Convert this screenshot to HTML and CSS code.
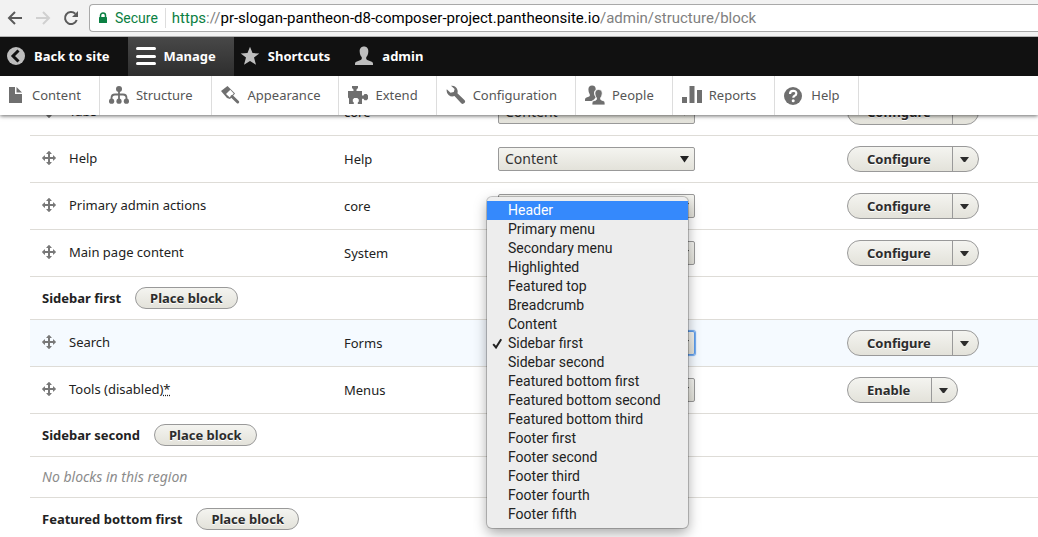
FILE: index.html
```html
<!DOCTYPE html>
<html lang="en">
<head>
<meta charset="utf-8">
<title>Block layout</title>
<link rel="stylesheet" href="styles.css">
</head>
<body>
<svg class="sprite" aria-hidden="true">
  <symbol id="move" viewBox="0 0 16 16"><path d="M14.904 7.753l-2.373-2.372c-.291-.292-.529-.193-.529.22v1.399h-3v-3h1.398c.414 0 .512-.239.221-.53l-2.371-2.372c-.137-.136-.36-.136-.497 0l-2.372 2.372c-.292.292-.193.53.22.53h1.399v3h-3v-1.369c0-.413-.239-.511-.53-.22l-2.372 2.372c-.136.136-.136.359 0 .494l2.372 2.372c.291.292.53.193.53-.221v-1.427h3v3h-1.400c-.413 0-.511.238-.22.529l2.374 2.373c.137.137.36.137.495 0l2.373-2.373c.29-.291.19-.529-.223-.529h-1.398v-3h3v1.400c0 .413.238.511.529.219l2.373-2.371c.137-.137.137-.359 0-.495z"/></symbol>
  <symbol id="caret" viewBox="0 0 9 5"><path d="M0 0h9L5.600 4.400Q4.500 5.400 3.400 4.400z"/></symbol>
  <symbol id="arrow" viewBox="0 0 9 7"><path d="M0 0h9L4.500 6.500z"/></symbol>
</svg>

<header class="top">
  <div class="browser">
    <button class="nav" type="button" aria-label="Back"><svg viewBox="0 0 16 16" width="16" height="16"><path d="M15 8H2M8 2L2 8l6 6" fill="none" stroke="#5a5a5a" stroke-width="2"/></svg></button>
    <button class="nav" type="button" aria-label="Forward" disabled><svg viewBox="0 0 16 16" width="16" height="16"><path d="M1 8h13M8 2l6 6-6 6" fill="none" stroke="#d0d0d0" stroke-width="2"/></svg></button>
    <button class="nav" type="button" aria-label="Reload"><svg viewBox="0 0 16 16" width="16" height="16"><path d="M13.700 10A6 6 0 1 1 12.300 3.800" fill="none" stroke="#5a5a5a" stroke-width="2"/><path d="M15 1v6H9z" fill="#5a5a5a"/></svg></button>
    <div class="address">
      <svg class="lock" viewBox="0 0 10 12" width="10" height="12"><path d="M2.500 5.500V3.500a2.500 2.500 0 0 1 5 0v2" fill="none" stroke="#0b8043" stroke-width="1.500"/><rect x="1" y="5" width="8" height="6" rx=".6" fill="#0b8043"/></svg>
      <span class="secure">Secure</span>
      <div class="url" role="textbox" aria-label="Address" contenteditable="true" spellcheck="false"><span class="scheme">https</span><span class="dim">://</span>pr-slogan-pantheon-d8-composer-project.pantheonsite.io<span class="dim">/admin/structure/block</span></div>
    </div>
  </div>

  <nav class="bar" aria-label="Toolbar">
    <a class="tab" href="#"><svg viewBox="0 0 20 20" width="20" height="20"><circle cx="10" cy="10" r="9" fill="#bebebe"/><path d="M12.500 4.500L7 10l5.500 5.500" fill="none" stroke="#111" stroke-width="3"/></svg>Back to site</a>
    <a class="tab active" href="#"><svg viewBox="0 0 20 20" width="20" height="20" fill="#fff"><rect y="1" width="20" height="3" rx="1.500"/><rect y="9" width="20" height="3" rx="1.500"/><rect y="16" width="20" height="3" rx="1.500"/></svg>Manage</a>
    <a class="tab" href="#"><svg viewBox="0 0 20 20" width="20" height="20" fill="#bebebe"><path d="M10 .8l2.500 6.300 6.800.3-5.300 4.200 2 7.100L10 14.900l-6 3.800 2-7.100L.7 7.400l6.800-.3z"/></svg>Shortcuts</a>
    <a class="tab" href="#"><svg viewBox="0 0 20 20" width="20" height="20" fill="#bebebe"><path d="M10 .5c3 0 4.500 2.200 4.300 5.200-.1 2.300-1 4.300-2 5.400-.3 1.800 0 2.500 1 3l4.400 1.700c.8.300 1.200 1 1.300 1.900v1.300H1v-1.300c.1-.9.500-1.600 1.300-1.900l4.400-1.700c1-.5 1.300-1.200 1-3-1-1.100-1.900-3.100-2-5.400C5.500 2.700 7 .5 10 .5z"/></svg>admin</a>
  </nav>

  <nav class="tray" aria-label="Administration">
    <a class="item" href="#"><svg viewBox="0 0 16 20" width="16" height="20"><path d="M0 2h6v7h7v9H0z"/><path d="M7.500 2l5.500 5.500H7.500z"/></svg>Content</a>
    <a class="item" href="#"><svg viewBox="0 0 20 20" width="20" height="20"><circle cx="10" cy="4" r="3"/><path d="M10 5v11M2.500 16v-3q0-3.500 3.500-3.500h8q3.500 0 3.500 3.500v3" fill="none" stroke="#6f6f6f" stroke-width="1.800"/><circle cx="2.600" cy="16.200" r="2.600"/><circle cx="10" cy="16.200" r="2.600"/><circle cx="17.400" cy="16.200" r="2.600"/></svg>Structure</a>
    <a class="item" href="#"><svg viewBox="0 0 20 20" width="20" height="20"><path d="M0 6L6.500 1 14 8.500l-5 5.500L6 13z"/><path d="M5 9L9.300 4.800l3.500 3.700-4 4z" fill="#fff"/><path d="M11 11.500l5.700 5.500" fill="none" stroke="#6f6f6f" stroke-width="3" stroke-linecap="round"/></svg>Appearance</a>
    <a class="item" href="#"><svg viewBox="0 0 20 20" width="20" height="20"><path d="M0 6h5.500V4.500L4 3V1h6v2L8.500 4.500V6H14v4.500h1.500l1-1.500h2.200l1.300 1.500v3.200l-1.300 1.500h-2.200l-1-1.500H14V19H9.800v-1.500l1-1V14.500L9.300 13H6.200l-1.400 1.500v2l1 1V19H1v-5.500l-1-1z"/></svg>Extend</a>
    <a class="item" href="#"><svg viewBox="0 0 20 20" width="20" height="20"><path d="M5 .8a5.800 5.800 0 0 1 6.400 7.500l7 6.600a2.300 2.300 0 0 1-3.200 3.300L8.500 11A5.800 5.800 0 0 1 .8 4.200l3.700 3.600L7.800 7l.8-3z"/></svg>Configuration</a>
    <a class="item" href="#"><svg viewBox="0 0 20 20" width="20" height="20"><path d="M7 .5C9.500.5 11 2 10.700 4.700 9 6 8.800 7.500 9.300 9.500c.4 1.300 1 2.200 1.500 2.700L9 14.500 6.500 16H0v-1.500q0-1.500 1.500-2l2.700-1q1-.7.600-2Q3.400 7.500 3.400 4.500C3.400 2 4.800.5 7 .5z"/><path d="M13.500 4.500c2.500 0 4 1.500 3.700 4.200-.1 1.800-.8 3.200-1.600 4.200q-.3 1.500.6 2l2.600 1q1.200.6 1.200 2V20H7v-2q0-1.500 1.200-2l2.800-1q.8-.6.500-2c-.8-1-1.500-2.300-1.600-4.200-.2-2.700 1.100-4.300 3.600-4.300z" stroke="#fff" stroke-width=".8"/></svg>People</a>
    <a class="item" href="#"><svg viewBox="0 0 20 20" width="20" height="20"><rect x="0" y="12" width="5" height="6"/><rect x="7.500" y="1" width="5" height="17"/><rect x="15" y="5" width="5" height="13"/></svg>Reports</a>
    <a class="item" href="#"><svg viewBox="0 0 20 20" width="20" height="20"><circle cx="9" cy="11" r="9"/><path d="M6 9q0-3.200 3.200-3.200T12.300 8.500q0 1.500-1.700 2.300-1.300.7-1.300 2" fill="none" stroke="#fff" stroke-width="2.200"/><circle cx="9.200" cy="15.800" r="1.500" fill="#fff"/></svg>Help</a>
  </nav>
</header>

<main class="page">
  <table class="blocks">
    <colgroup><col class="c-block"><col class="c-category"><col class="c-region"><col></colgroup>
    <tbody>
      <tr>
        <td><div class="name"><svg class="move"><use href="#move"/></svg>Tabs</div></td>
        <td>core</td>
        <td><div class="pick"><select aria-label="Region for Tabs"><option>Content</option></select><svg class="arrow"><use href="#arrow"/></svg></div></td>
        <td><div class="drop"><button type="button" class="main">Configure</button><button type="button" class="more" aria-label="More actions"><svg class="caret"><use href="#caret"/></svg></button></div></td>
      </tr>
      <tr>
        <td><div class="name"><svg class="move"><use href="#move"/></svg>Help</div></td>
        <td>Help</td>
        <td><div class="pick"><select aria-label="Region for Help"><option>Content</option></select><svg class="arrow"><use href="#arrow"/></svg></div></td>
        <td><div class="drop"><button type="button" class="main">Configure</button><button type="button" class="more" aria-label="More actions"><svg class="caret"><use href="#caret"/></svg></button></div></td>
      </tr>
      <tr>
        <td><div class="name"><svg class="move"><use href="#move"/></svg>Primary admin actions</div></td>
        <td>core</td>
        <td><div class="pick"><select aria-label="Region for Primary admin actions"><option>Content</option></select><svg class="arrow"><use href="#arrow"/></svg></div></td>
        <td><div class="drop"><button type="button" class="main">Configure</button><button type="button" class="more" aria-label="More actions"><svg class="caret"><use href="#caret"/></svg></button></div></td>
      </tr>
      <tr>
        <td><div class="name"><svg class="move"><use href="#move"/></svg>Main page content</div></td>
        <td>System</td>
        <td><div class="pick"><select aria-label="Region for Main page content"><option>Content</option></select><svg class="arrow"><use href="#arrow"/></svg></div></td>
        <td><div class="drop"><button type="button" class="main">Configure</button><button type="button" class="more" aria-label="More actions"><svg class="caret"><use href="#caret"/></svg></button></div></td>
      </tr>
      <tr class="region">
        <th colspan="4" scope="rowgroup"><div class="title">Sidebar first<button type="button" class="place">Place block</button></div></th>
      </tr>
      <tr class="current">
        <td><div class="name"><svg class="move"><use href="#move"/></svg>Search</div></td>
        <td>Forms</td>
        <td><div class="pick open"><select aria-label="Region for Search"><option>Sidebar first</option></select><svg class="arrow"><use href="#arrow"/></svg>
          <ul class="menu" role="listbox" aria-label="Region">
            <li class="choice hover" role="option">Header</li>
            <li class="choice" role="option">Primary menu</li>
            <li class="choice" role="option">Secondary menu</li>
            <li class="choice" role="option">Highlighted</li>
            <li class="choice" role="option">Featured top</li>
            <li class="choice" role="option">Breadcrumb</li>
            <li class="choice" role="option">Content</li>
            <li class="choice" role="option" aria-selected="true"><svg class="check" viewBox="0 0 11 11" width="11" height="11"><path d="M1.200 6.200L4 9.500 9.200 1.200" fill="none" stroke="#222" stroke-width="2"/></svg>Sidebar first</li>
            <li class="choice" role="option">Sidebar second</li>
            <li class="choice" role="option">Featured bottom first</li>
            <li class="choice" role="option">Featured bottom second</li>
            <li class="choice" role="option">Featured bottom third</li>
            <li class="choice" role="option">Footer first</li>
            <li class="choice" role="option">Footer second</li>
            <li class="choice" role="option">Footer third</li>
            <li class="choice" role="option">Footer fourth</li>
            <li class="choice" role="option">Footer fifth</li>
          </ul></div></td>
        <td><div class="drop"><button type="button" class="main">Configure</button><button type="button" class="more" aria-label="More actions"><svg class="caret"><use href="#caret"/></svg></button></div></td>
      </tr>
      <tr>
        <td><div class="name"><svg class="move"><use href="#move"/></svg><span>Tools (disabled)<abbr title="Changed">*</abbr></span></div></td>
        <td>Menus</td>
        <td><div class="pick"><select aria-label="Region for Tools"><option>Sidebar first</option></select><svg class="arrow"><use href="#arrow"/></svg></div></td>
        <td><div class="drop"><button type="button" class="main">Enable</button><button type="button" class="more" aria-label="More actions"><svg class="caret"><use href="#caret"/></svg></button></div></td>
      </tr>
      <tr class="region">
        <th colspan="4" scope="rowgroup"><div class="title">Sidebar second<button type="button" class="place">Place block</button></div></th>
      </tr>
      <tr class="empty">
        <td colspan="4"><em>No blocks in this region</em></td>
      </tr>
      <tr class="region">
        <th colspan="4" scope="rowgroup"><div class="title">Featured bottom first<button type="button" class="place">Place block</button></div></th>
      </tr>
    </tbody>
  </table>
</main>
</body>
</html>
```

FILE: styles.css
```css
* {
  box-sizing: border-box;
}

body {
  margin: 0;
  height: 100vh;
  display: flex;
  flex-direction: column;
  overflow: hidden;
  background: #fff;
  color: #222;
  font: 13px/20px "Lucida Grande", "Noto Sans", "Open Sans", sans-serif;
}

button,
select {
  font: inherit;
  color: inherit;
}

.sprite {
  display: none;
}

.top {
  position: relative;
  z-index: 1;
  flex: none;
  box-shadow: 0 1px 4px rgba(0, 0, 0, 0.6);
}

/* Browser chrome */

.browser {
  display: flex;
  align-items: center;
  gap: 12px;
  height: 37px;
  padding-left: 7px;
  background: #f2f2f2;
  border-bottom: 1px solid #b4b4b4;
}

.nav {
  display: flex;
  padding: 0;
  border: 0;
  background: none;
}

.address {
  flex: 1;
  display: flex;
  align-items: center;
  height: 28px;
  margin-left: -2px;
  padding-left: 8px;
  background: #fff;
  border: 1px solid #a9a9a9;
  border-right: 0;
  border-radius: 4px 0 0 4px;
  font: 14px/20px Roboto, sans-serif;
  white-space: nowrap;
}

.secure {
  margin-left: 7px;
  padding-right: 7px;
  border-right: 1px solid #ddd;
  color: #0b8043;
}

.url {
  padding-left: 6px;
  color: #000;
  font-size: 15px;
}

.scheme {
  color: #0b8043;
}

.dim {
  color: #808080;
}

/* Toolbar */

.bar {
  display: flex;
  height: 39px;
  background: #111;
}

.tab {
  display: flex;
  align-items: center;
  gap: 8px;
  padding: 0 18px 1px 6px;
  color: #fff;
  font-weight: 700;
  text-decoration: none;
}

.tab.active {
  padding-left: 8px;
  background: linear-gradient(#484848, #2e2e2e);
}

.tray {
  display: flex;
  height: 39px;
  background: #fff;
}

.item {
  display: flex;
  align-items: center;
  gap: 7px;
  padding: 0 18px 2px 9px;
  border-right: 1px solid #ddd;
  color: #565656;
  fill: #6f6f6f;
  text-decoration: none;
}

/* Block table */

.page {
  flex: 1;
  min-height: 0;
  overflow: hidden;
  padding-left: 30px;
}

.blocks {
  width: 100%;
  margin-top: -26px;
  table-layout: fixed;
  border-collapse: separate;
  border-spacing: 0;
}

.c-block {
  width: 302px;
}

.c-category {
  width: 154px;
}

.c-region {
  width: 349px;
}

td,
th {
  height: 47px;
  padding: 0 12px;
  border-bottom: 1px solid #dedcd7;
  text-align: left;
  vertical-align: middle;
}

.region th {
  height: 43px;
}

.empty td {
  height: 41px;
  color: #8c8c8c;
  font-size: 14px;
}

.current td {
  background: #f5faff;
}

.name {
  display: flex;
  align-items: center;
  gap: 12px;
  padding-bottom: 2px;
}

.name abbr {
  text-decoration: underline dotted;
}

.move {
  width: 16px;
  height: 16px;
  margin-left: -1px;
  fill: #787878;
}

.title {
  display: flex;
  align-items: center;
  gap: 14px;
}

.place,
.drop {
  border: 1px solid #999;
  background: linear-gradient(#f4f4f0, #e3e2da);
}

.place,
.main {
  font-weight: 700;
  color: #2c2c2c;
  text-shadow: 0 1px #fff;
}

.place {
  height: 22px;
  padding: 0 14px;
  border-radius: 11px;
  line-height: 20px;
}

.drop {
  display: inline-flex;
  height: 26px;
  border-radius: 13px;
  vertical-align: middle;
}

.main {
  padding: 0 21px 0 19px;
  border: 0;
  background: none;
  line-height: 24px;
}

.more {
  display: flex;
  align-items: center;
  justify-content: center;
  width: 26px;
  padding: 0 2px 0 0;
  border: 0;
  border-left: 1px solid #999;
  background: none;
}

.caret {
  width: 9px;
  height: 5px;
  fill: #2c2c2c;
}

/* Region select */

.pick {
  position: relative;
  display: grid;
  align-items: center;
  width: 197px;
}

.pick select,
.arrow {
  grid-area: 1 / 1;
}

.pick select {
  width: 100%;
  height: 24px;
  padding: 0 6px;
  border: 1px solid #999;
  border-radius: 2px;
  outline: 0;
  appearance: none;
  background: linear-gradient(#f4f4f0, #e3e2da);
  color: #333;
  font-size: 14px;
}

.pick.open select {
  border-color: #5c9bea;
  box-shadow: 0 0 1px 1px #6aa5ee;
}

.arrow {
  justify-self: end;
  width: 9px;
  height: 7px;
  margin-right: 6px;
  fill: #222;
  pointer-events: none;
}

.menu {
  position: absolute;
  z-index: 2;
  top: -134px;
  left: -11px;
  width: 201px;
  margin: 0;
  padding: 4px 0;
  border-radius: 5px;
  background: #ededed;
  box-shadow: 0 0 0 1px rgba(0, 0, 0, 0.2), 0 5px 13px rgba(0, 0, 0, 0.35);
  list-style: none;
  font: 14px/19px Roboto, sans-serif;
}

.choice {
  position: relative;
  padding-left: 21px;
}

.choice.hover {
  background: #3589fc;
  color: #fff;
}

.check {
  position: absolute;
  top: 4px;
  left: 5px;
}
```
